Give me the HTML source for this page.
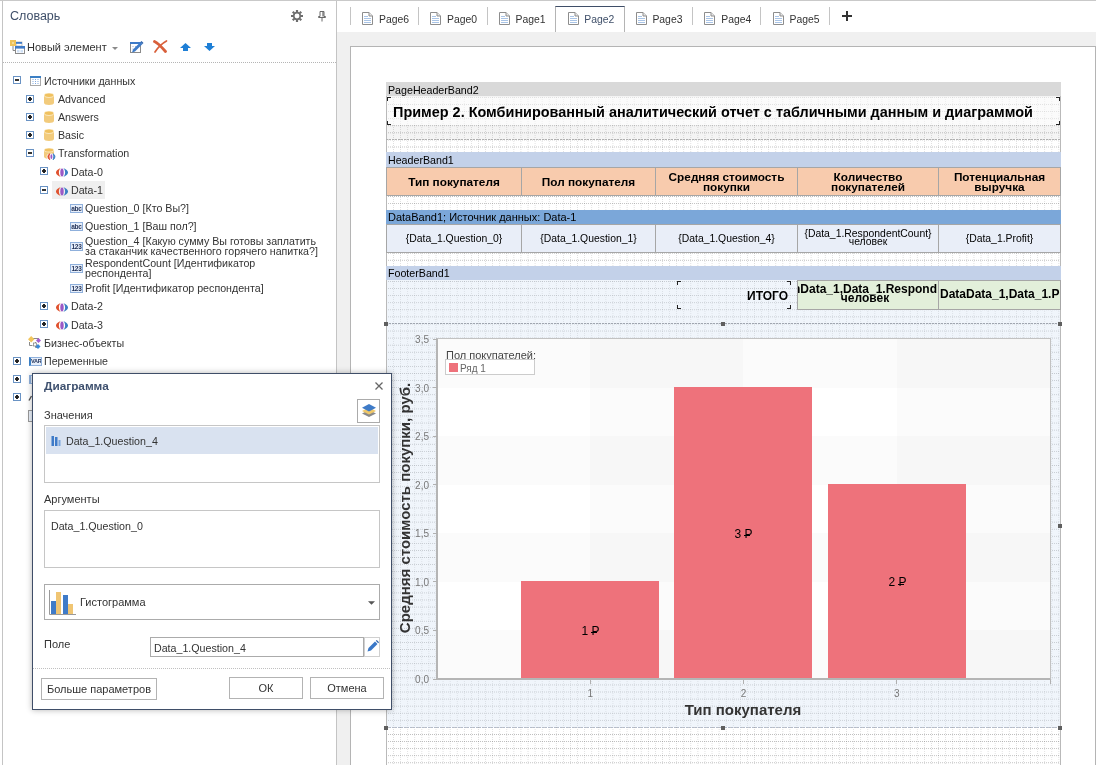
<!DOCTYPE html>
<html><head><meta charset="utf-8">
<style>
*{box-sizing:border-box;margin:0;padding:0}
html,body{width:1096px;height:765px;overflow:hidden;background:#fff;font-family:"Liberation Sans",sans-serif;font-size:10.67px;color:#333}
.a{position:absolute}
.t{position:absolute;white-space:nowrap;line-height:12px}
/* left panel */
#lp{left:0;top:0;width:337px;height:765px;background:#fff}
.ex{position:absolute;width:8px;height:8px;border:1px solid #6a93c4;background:#fff}
.ex:before{content:"";position:absolute;left:1px;top:2px;width:4px;height:2px;background:#333}
.ex.p:after{content:"";position:absolute;left:2px;top:1px;width:2px;height:4px;background:#222}
.tr{position:absolute;white-space:nowrap;line-height:12px;font-size:10.67px;color:#333}
/* workspace */
#ws{left:337px;top:0;width:759px;height:765px;background:#f0f0f0}
#tabs{left:0;top:0;width:759px;height:32px;background:#fff}
.tab{position:absolute;top:15px;font-size:10.4px;line-height:12px;color:#333;white-space:nowrap}
.sep{position:absolute;top:7px;width:1px;height:18px;background:#c4c4c4}
#page{left:13px;top:46px;width:746px;height:719px;background:#fff;border:1px solid #b4b4b4;border-bottom:0}
.grid{background-image:conic-gradient(at 1px 1px,transparent 270deg,rgba(0,0,0,.26) 0),conic-gradient(at 1px 1px,transparent 270deg,rgba(0,0,0,.13) 0);background-size:2px 7.086px,7.086px 2px;background-position:0 -.1px,.4px 0}
.bl{position:absolute;left:386px;width:675px;height:14px;font-size:10.67px;line-height:14px;color:#000;padding-left:2px;white-space:nowrap}
.cell{position:absolute;border:1px solid #a6a6a6;display:flex;align-items:center;justify-content:center;text-align:center;color:#000;overflow:hidden}
.hc{background:#f8cbad;font-weight:bold;font-size:11.8px;line-height:10px;top:167px;height:29px;padding-top:0}
.dc{background:#e9eef8;font-size:10.4px;line-height:9px;top:224px;height:29px}
.fc{background:#e2efda;font-weight:bold;font-size:12px;line-height:10.5px;top:280px;height:30px;white-space:nowrap}
.hd{position:absolute;width:4px;height:4px;background:#5f5f5f}
.yl{position:absolute;left:400px;width:29px;text-align:right;font-size:10px;line-height:10px;color:#777}
.yt{position:absolute;left:433px;width:4px;height:1px;background:#b0b0b0}
.bar{position:absolute;background:#ee727b}
.bv{position:absolute;font-size:12px;line-height:12px;color:#000;width:40px;text-align:center}
.xl{position:absolute;font-size:10px;line-height:10px;color:#777;width:20px;text-align:center;top:689px}
/* dialog */
#dlg{left:32px;top:373px;width:360px;height:337px;background:#fff;border:1px solid #3f4e68;box-shadow:0 0 6px rgba(0,0,0,.3)}
.dt{position:absolute;white-space:nowrap;font-size:11px;line-height:12px;color:#333}
.box{position:absolute;border:1px solid #c6c6c6;background:#fff}
.btn{position:absolute;border:1px solid #b3b3b3;background:#fff;font-size:11px;line-height:20px;text-align:center;color:#333;height:22px}
</style></head><body>
<div id="root" style="position:absolute;left:0;top:0;width:1096px;height:765px;will-change:transform;background:#fff">
<!-- LEFT PANEL -->
<div id="lp" class="a">
<div class="a" style="left:0;top:0;width:1096px;height:1px;background:#c9c9c9;z-index:5"></div>
<div class="a" style="left:2px;top:0;width:1px;height:765px;background:#c4c4c4"></div>
<div class="a" style="left:336px;top:0;width:1px;height:765px;background:#c4c4c4"></div>
<div class="t" style="left:10px;top:9px;font-size:12.5px;line-height:15px;color:#3f4f69">Словарь</div>
<div class="t" style="left:27px;top:41px;font-size:11px;line-height:13px;color:#333">Новый элемент</div>
<div class="a" style="left:3px;top:62px;width:333px;height:1px;background-image:repeating-linear-gradient(90deg,#b5b5b5 0 1px,transparent 1px 2px)"></div>
<svg class="a" style="left:291px;top:10px" width="12" height="12" viewBox="0 0 12 12"><g stroke="#6e6e6e" stroke-width="2.200"><path d="M6 0v2.200M6 9.800V12M0 6h2.200M9.800 6H12M1.760 1.760l1.500 1.500M8.740 8.740l1.500 1.500M10.240 1.760l-1.500 1.500M3.260 8.740l-1.500 1.500"/></g><circle cx="6" cy="6" r="3.300" fill="none" stroke="#6e6e6e" stroke-width="1.700"/></svg>
<svg class="a" style="left:318px;top:11px" width="8" height="11" viewBox="0 0 8 11"><path d="M2 .5h4v5h1.500v1h-7v-1H2z" fill="#fff" stroke="#6a6a6a"/><path d="M5 1v4.500" stroke="#6a6a6a" stroke-width="1.200"/><path d="M4 6.500v4" stroke="#6a6a6a"/></svg>
<svg class="a" style="left:10px;top:40px" width="15" height="14" viewBox="0 0 15 14"><path d="M3 6v4.500h2" stroke="#8a8a8a" fill="none"/><rect x="6" y="2" width="6" height="4" fill="#fff" stroke="#999" stroke-width=".6"/><rect x="6" y="2" width="6" height="1.800" fill="#3f7bc8"/><rect x="5.500" y="6.500" width="9" height="7" fill="#fff" stroke="#8a8a8a"/><rect x="5" y="6" width="10" height="2.600" fill="#3f7bc8"/><path d="M7 10h2.500v2.500H7zM10.500 10H13v2.500h-2.500z" fill="#cfe0f5"/><rect x="0" y="0" width="6" height="6" fill="#f0c35a"/><rect x="2" y="2" width="2" height="2" fill="#f7dc98"/></svg>
<svg class="a" style="left:111.500px;top:46.500px" width="6" height="3" viewBox="0 0 6 3"><path d="M0 0h6L3 3z" fill="#8a8a8a"/></svg>
<svg class="a" style="left:129px;top:40px" width="15" height="14" viewBox="0 0 15 14"><rect x="1.500" y="3" width="10" height="9.500" fill="#fff" stroke="#8a8a8a"/><rect x="1" y="2" width="11" height="2" fill="#3f7bc8"/><path d="M3.500 6.500h1M3.500 9h1M6 6.500h1" stroke="#9bb7de"/><path d="M3 12.500l1-3 7.500-7.500 2 2-7.500 7.500z" fill="#3f7bc8"/><path d="M11.500 2l1-1 2 2-1 1z" fill="#2a5fa8"/></svg>
<svg class="a" style="left:153px;top:40px" width="15" height="13" viewBox="0 0 15 13"><path d="M1.500 1.500C5 3 9 7.500 12.500 11.500" stroke="#d9603b" stroke-width="2.800" fill="none" stroke-linecap="round"/><path d="M13.500 1C9 3.500 4.500 8 2 12" stroke="#d9603b" stroke-width="1.700" fill="none" stroke-linecap="round"/></svg>
<svg class="a" style="left:180px;top:43px" width="11" height="8" viewBox="0 0 11 8"><path d="M5.500 0L11 5H8v3H3V5H0z" fill="#1e7fd6"/></svg>
<svg class="a" style="left:204px;top:43px" width="11" height="8" viewBox="0 0 11 8"><path d="M5.500 8L11 3H8V0H3v3H0z" fill="#1e7fd6"/></svg>
<div class="ex" style="left:13px;top:76px"></div>
<svg class="a" style="left:30px;top:76px" width="11" height="10" viewBox="0 0 11 10"><rect x=".5" y=".5" width="10" height="9" fill="#fff" stroke="#a9a9a9"/><rect x="0" y="0" width="11" height="2" fill="#3b7fc4"/><path d="M2.500 3.500h1M5 3.500h1M7.500 3.500h1M2.500 5.500h1M5 5.500h1M7.500 5.500h1M2.500 7.500h1M5 7.500h1M7.500 7.500h1" stroke="#7fa8df" stroke-width="1"/></svg>
<div class="tr" style="left:44px;top:75px">Источники данных</div>
<div class="ex p" style="left:26px;top:95px"></div>
<svg class="a" style="left:44px;top:93px" width="10" height="12" viewBox="0 0 10 12"><path d="M0 2.500v7.200c0 1.300 2.200 2.300 5 2.300s5-1 5-2.300V2.500z" fill="#f2cb7c"/><ellipse cx="5" cy="2.500" rx="5" ry="2.400" fill="#fae6bb"/><ellipse cx="5" cy="2.200" rx="4.200" ry="1.700" fill="#f0c15f"/></svg>
<div class="tr" style="left:58px;top:93px">Advanced</div>
<div class="ex p" style="left:26px;top:113px"></div>
<svg class="a" style="left:44px;top:111px" width="10" height="12" viewBox="0 0 10 12"><path d="M0 2.500v7.200c0 1.300 2.200 2.300 5 2.300s5-1 5-2.300V2.500z" fill="#f2cb7c"/><ellipse cx="5" cy="2.500" rx="5" ry="2.400" fill="#fae6bb"/><ellipse cx="5" cy="2.200" rx="4.200" ry="1.700" fill="#f0c15f"/></svg>
<div class="tr" style="left:58px;top:111px">Answers</div>
<div class="ex p" style="left:26px;top:131px"></div>
<svg class="a" style="left:44px;top:129px" width="10" height="12" viewBox="0 0 10 12"><path d="M0 2.500v7.200c0 1.300 2.200 2.300 5 2.300s5-1 5-2.300V2.500z" fill="#f2cb7c"/><ellipse cx="5" cy="2.500" rx="5" ry="2.400" fill="#fae6bb"/><ellipse cx="5" cy="2.200" rx="4.200" ry="1.700" fill="#f0c15f"/></svg>
<div class="tr" style="left:58px;top:129px">Basic</div>
<div class="ex" style="left:26px;top:149px"></div>
<svg class="a" style="left:44px;top:148px" width="12" height="12" viewBox="0 0 12 12"><path d="M0 2.300v6.500c0 1.200 2.200 2.200 5 2.200s5-1 5-2.200V2.300z" fill="#f2cb7c"/><ellipse cx="5" cy="2.300" rx="5" ry="2.200" fill="#fae6bb"/><ellipse cx="5" cy="2" rx="4.200" ry="1.500" fill="#f0c15f"/><ellipse cx="7.300" cy="8.700" rx="4.700" ry="3.300" fill="#fff"/><path d="M5.800 5.700a3.300 3.300 0 0 0 0 6c-1-2-1-4 0-6z" fill="#e0522f" stroke="#e0522f" stroke-width=".9"/><ellipse cx="7.400" cy="8.700" rx="1" ry="2.400" fill="#9b59c6"/><path d="M9 5.700a3.300 3.300 0 0 1 0 6c1-2 1-4 0-6z" fill="#3b7fc4" stroke="#3b7fc4" stroke-width=".9"/></svg>
<div class="tr" style="left:58px;top:147px">Transformation</div>
<div class="ex p" style="left:40px;top:167px"></div>
<svg class="a" style="left:56px;top:168.0px" width="12" height="9" viewBox="0 0 12 9"><path d="M4.700 0C-1.600 2.300-1.600 6.700 4.700 9 2.300 6.500 2.300 2.500 4.700 0z" fill="#e0522f"/><ellipse cx="6" cy="4.500" rx="1.700" ry="3.900" fill="#9b59c6"/><path d="M7.300 0C13.600 2.300 13.600 6.700 7.300 9 9.700 6.500 9.700 2.500 7.300 0z" fill="#3b7fc4"/></svg>
<div class="tr" style="left:71px;top:166px">Data-0</div>
<div class="a" style="left:52px;top:181px;width:53px;height:18px;background:#efefef"></div>
<div class="ex" style="left:40px;top:186px"></div>
<svg class="a" style="left:56px;top:186.5px" width="12" height="9" viewBox="0 0 12 9"><path d="M4.700 0C-1.600 2.300-1.600 6.700 4.700 9 2.300 6.500 2.300 2.500 4.700 0z" fill="#e0522f"/><ellipse cx="6" cy="4.500" rx="1.700" ry="3.900" fill="#9b59c6"/><path d="M7.300 0C13.600 2.300 13.600 6.700 7.300 9 9.700 6.500 9.700 2.500 7.300 0z" fill="#3b7fc4"/></svg>
<div class="tr" style="left:71px;top:184px">Data-1</div>
<div class="a" style="left:70px;top:204px;width:13px;height:9px;border:1px solid #8fb0dc;background:#e6eefa;font-size:6.500px;line-height:7px;font-weight:bold;color:#1f2f55;text-align:center;letter-spacing:-.2px;overflow:hidden;">abc</div>
<div class="tr" style="left:85px;top:202px">Question_0 [Кто Вы?]</div>
<div class="a" style="left:70px;top:222px;width:13px;height:9px;border:1px solid #8fb0dc;background:#e6eefa;font-size:6.500px;line-height:7px;font-weight:bold;color:#1f2f55;text-align:center;letter-spacing:-.2px;overflow:hidden;">abc</div>
<div class="tr" style="left:85px;top:220px">Question_1 [Ваш пол?]</div>
<div class="a" style="left:70px;top:242px;width:13px;height:9px;border:1px solid #8fb0dc;background:#e6eefa;font-size:6.500px;line-height:7px;font-weight:bold;color:#1f2f55;text-align:center;letter-spacing:-.2px;overflow:hidden;">123</div>
<div class="tr" style="left:85px;top:236px;line-height:10px">Question_4 [Какую сумму Вы готовы заплатить<br>за стаканчик качественного горячего напитка?]</div>
<div class="a" style="left:70px;top:264px;width:13px;height:9px;border:1px solid #8fb0dc;background:#e6eefa;font-size:6.500px;line-height:7px;font-weight:bold;color:#1f2f55;text-align:center;letter-spacing:-.2px;overflow:hidden;">123</div>
<div class="tr" style="left:85px;top:258px;line-height:10px">RespondentCount [Идентификатор<br>респондента]</div>
<div class="a" style="left:70px;top:284px;width:13px;height:9px;border:1px solid #8fb0dc;background:#e6eefa;font-size:6.500px;line-height:7px;font-weight:bold;color:#1f2f55;text-align:center;letter-spacing:-.2px;overflow:hidden;">123</div>
<div class="tr" style="left:85px;top:282px">Profit [Идентификатор респондента]</div>
<div class="ex p" style="left:40px;top:302px"></div>
<svg class="a" style="left:56px;top:303.0px" width="12" height="9" viewBox="0 0 12 9"><path d="M4.700 0C-1.600 2.300-1.600 6.700 4.700 9 2.300 6.500 2.300 2.500 4.700 0z" fill="#e0522f"/><ellipse cx="6" cy="4.500" rx="1.700" ry="3.900" fill="#9b59c6"/><path d="M7.300 0C13.600 2.300 13.600 6.700 7.300 9 9.700 6.500 9.700 2.500 7.300 0z" fill="#3b7fc4"/></svg>
<div class="tr" style="left:71px;top:300px">Data-2</div>
<div class="ex p" style="left:40px;top:320px"></div>
<svg class="a" style="left:56px;top:321.0px" width="12" height="9" viewBox="0 0 12 9"><path d="M4.700 0C-1.600 2.300-1.600 6.700 4.700 9 2.300 6.500 2.300 2.500 4.700 0z" fill="#e0522f"/><ellipse cx="6" cy="4.500" rx="1.700" ry="3.900" fill="#9b59c6"/><path d="M7.300 0C13.600 2.300 13.600 6.700 7.300 9 9.700 6.500 9.700 2.500 7.300 0z" fill="#3b7fc4"/></svg>
<div class="tr" style="left:71px;top:319px">Data-3</div>
<svg class="a" style="left:28px;top:336px" width="13" height="13" viewBox="0 0 13 13"><path d="M1.500 6v3.500h3M5 2.500h6M7.500 6v5.500h2" stroke="#8a8a8a" fill="none"/><rect x="5.500" y="7" width="3" height="3" fill="#fff" stroke="#8a8a8a" stroke-width=".8"/><path d="M3.200 0l3.200 3.200-3.200 3.200L0 3.200z" fill="#f2c55c"/><path d="M10.500 2l2.500 2.500-2.500 2.500L8 4.500z" fill="#a45fd0"/><path d="M10 8l2.500 2.500L10 13 7.500 10.500z" fill="#3b8ad8"/></svg>
<div class="tr" style="left:44px;top:337px">Бизнес-объекты</div>
<div class="ex p" style="left:13px;top:357px"></div>
<div class="a" style="left:29px;top:357px;width:13px;height:9px;border:1px solid #8fb0dc;background:#e6eefa;font-size:6.500px;line-height:7px;font-weight:bold;color:#1f2f55;text-align:center;letter-spacing:-.2px;overflow:hidden;border-left:2px solid #3b7fc4;font-size:5.500px;letter-spacing:-.3px">VAR</div>
<div class="tr" style="left:44px;top:355px">Переменные</div>
<div class="ex p" style="left:13px;top:375px"></div>
<div class="a" style="left:29px;top:375px;width:13px;height:9px;border:1px solid #8fb0dc;background:#e6eefa;font-size:6.500px;line-height:7px;font-weight:bold;color:#1f2f55;text-align:center;letter-spacing:-.2px;overflow:hidden;border-left:2px solid #8fb0dc"></div>
<div class="ex p" style="left:13px;top:393px"></div>
<div class="a" style="left:28px;top:410px;width:6px;height:12px;border:1px solid #999;background:#eaf1fa"></div>
<svg class="a" style="left:27px;top:391px" width="8" height="10" viewBox="0 0 8 10"><path d="M2 9.500L4.500 5" stroke="#555" stroke-width="1.400"/></svg>
</div>
<!-- WORKSPACE -->
<div id="ws" class="a">
<div id="tabs" class="a">
<svg class="a" style="left:24.5px;top:12px" width="11" height="13" viewBox="0 0 11 13"><path d="M.5 .5h6.500l3.500 3.500v8.500h-10z" fill="#fff" stroke="#8d8d8d"/><path d="M7 .5v3.500h3.500" fill="#e8e8e8" stroke="#8d8d8d"/><path d="M2 4.500h4M2 6.500h7M2 8.500h7M2 10.500h7" stroke="#a9c4e6" stroke-width="1.200"/></svg>
<div class="tab" style="left:42px;top:14px;color:#333">Page6</div>
<svg class="a" style="left:93px;top:12px" width="11" height="13" viewBox="0 0 11 13"><path d="M.5 .5h6.500l3.500 3.500v8.500h-10z" fill="#fff" stroke="#8d8d8d"/><path d="M7 .5v3.500h3.500" fill="#e8e8e8" stroke="#8d8d8d"/><path d="M2 4.500h4M2 6.500h7M2 8.500h7M2 10.500h7" stroke="#a9c4e6" stroke-width="1.200"/></svg>
<div class="tab" style="left:110px;top:14px;color:#333">Page0</div>
<svg class="a" style="left:162px;top:12px" width="11" height="13" viewBox="0 0 11 13"><path d="M.5 .5h6.500l3.500 3.500v8.500h-10z" fill="#fff" stroke="#8d8d8d"/><path d="M7 .5v3.500h3.500" fill="#e8e8e8" stroke="#8d8d8d"/><path d="M2 4.500h4M2 6.500h7M2 8.500h7M2 10.500h7" stroke="#a9c4e6" stroke-width="1.200"/></svg>
<div class="tab" style="left:178.5px;top:14px;color:#333">Page1</div>
<svg class="a" style="left:230.5px;top:12px" width="11" height="13" viewBox="0 0 11 13"><path d="M.5 .5h6.500l3.500 3.500v8.500h-10z" fill="#fff" stroke="#8d8d8d"/><path d="M7 .5v3.500h3.500" fill="#e8e8e8" stroke="#8d8d8d"/><path d="M2 4.500h4M2 6.500h7M2 8.500h7M2 10.500h7" stroke="#a9c4e6" stroke-width="1.200"/></svg>
<div class="tab" style="left:247.29999999999995px;top:14px;color:#3f4f69">Page2</div>
<svg class="a" style="left:298.5px;top:12px" width="11" height="13" viewBox="0 0 11 13"><path d="M.5 .5h6.500l3.500 3.500v8.500h-10z" fill="#fff" stroke="#8d8d8d"/><path d="M7 .5v3.500h3.500" fill="#e8e8e8" stroke="#8d8d8d"/><path d="M2 4.500h4M2 6.500h7M2 8.500h7M2 10.500h7" stroke="#a9c4e6" stroke-width="1.200"/></svg>
<div class="tab" style="left:315.4px;top:14px;color:#333">Page3</div>
<svg class="a" style="left:367px;top:12px" width="11" height="13" viewBox="0 0 11 13"><path d="M.5 .5h6.500l3.500 3.500v8.500h-10z" fill="#fff" stroke="#8d8d8d"/><path d="M7 .5v3.500h3.500" fill="#e8e8e8" stroke="#8d8d8d"/><path d="M2 4.500h4M2 6.500h7M2 8.500h7M2 10.500h7" stroke="#a9c4e6" stroke-width="1.200"/></svg>
<div class="tab" style="left:384.29999999999995px;top:14px;color:#333">Page4</div>
<svg class="a" style="left:435.5px;top:12px" width="11" height="13" viewBox="0 0 11 13"><path d="M.5 .5h6.500l3.500 3.500v8.500h-10z" fill="#fff" stroke="#8d8d8d"/><path d="M7 .5v3.500h3.500" fill="#e8e8e8" stroke="#8d8d8d"/><path d="M2 4.500h4M2 6.500h7M2 8.500h7M2 10.500h7" stroke="#a9c4e6" stroke-width="1.200"/></svg>
<div class="tab" style="left:452.6px;top:14px;color:#333">Page5</div>
<div class="sep" style="left:13px"></div>
<div class="sep" style="left:81px"></div>
<div class="sep" style="left:150px"></div>
<div class="sep" style="left:355px"></div>
<div class="sep" style="left:423px"></div>
<div class="sep" style="left:492px"></div>
<div class="a" style="left:218px;top:6px;width:70px;height:26px;border:1px solid #b4b4b4;border-top:1px solid #3f4e68;border-bottom:0"></div>
<div class="a" style="left:505px;top:15px;width:10px;height:2px;background:#333"></div><div class="a" style="left:509px;top:11px;width:2px;height:10px;background:#333"></div>
</div>
<div id="page" class="a"></div>
</div>
<div class="a grid" style="left:386px;top:97px;width:675px;height:668px;background-position:0 0"></div>
<div class="a" style="left:386px;top:82px;width:1px;height:683px;background:#b9b9b9"></div>
<div class="a" style="left:1060px;top:82px;width:1px;height:683px;background:#b9b9b9"></div>
<div class="bl" style="top:82px;background:#d9d9d9;padding-top:1px">PageHeaderBand2</div>
<div class="a" style="left:387px;top:96px;width:673px;height:43px;background:rgba(0,0,0,.045)"></div>
<div class="a" style="left:386px;top:139px;width:675px;height:1px;background-image:repeating-linear-gradient(90deg,#b0b0b0 0 2px,transparent 2px 3px)"></div>
<div class="a" style="left:387px;top:97px;width:673px;height:28px;background:rgba(255,255,255,.6)"></div>
<div class="t" style="left:393px;top:103px;font-size:14.44px;line-height:18px;font-weight:bold;color:#000">Пример 2. Комбинированный аналитический отчет с табличными данным и диаграммой</div>
<div class="a" style="left:387px;top:97px;width:4px;height:4px;border-left:1px solid #222;border-top:1px solid #222"></div>
<div class="a" style="left:387px;top:121px;width:4px;height:4px;border-left:1px solid #222;border-bottom:1px solid #222"></div>
<div class="a" style="left:1056px;top:97px;width:4px;height:4px;border-right:1px solid #222;border-top:1px solid #222"></div>
<div class="a" style="left:1056px;top:121px;width:4px;height:4px;border-right:1px solid #222;border-bottom:1px solid #222"></div>
<div class="bl" style="top:152.300px;height:14.700px;background:#c3d1e9;padding-top:.7px">HeaderBand1</div>
<div class="cell hc" style="left:386px;width:136px">Тип покупателя</div>
<div class="cell hc" style="left:521px;width:135px">Пол покупателя</div>
<div class="cell hc" style="left:655px;width:143px">Средняя стоимость<br>покупки</div>
<div class="cell hc" style="left:797px;width:142px">Количество<br>покупателей</div>
<div class="cell hc" style="left:938px;width:123px">Потенциальная<br>выручка</div>
<div class="bl" style="top:209.600px;height:14.400px;background:#7ba7d9;font-size:11px">DataBand1; Источник данных: Data-1</div>
<div class="cell dc" style="left:386px;width:136px">{Data_1.Question_0}</div>
<div class="cell dc" style="left:521px;width:135px">{Data_1.Question_1}</div>
<div class="cell dc" style="left:655px;width:143px">{Data_1.Question_4}</div>
<div class="cell dc" style="left:797px;width:142px"><span style="position:relative;top:-1px;line-height:8px">{Data_1.RespondentCount}<br>человек</span></div>
<div class="cell dc" style="left:938px;width:123px">{Data_1.Profit}</div>
<div class="a" style="left:387px;top:280px;width:673px;height:44px;background:rgba(214,226,245,.36)"></div>
<div class="bl" style="top:265.900px;height:14.500px;background:#c3d1e9">FooterBand1</div>
<div class="t" style="left:677px;top:289px;width:111px;text-align:right;font-size:12px;line-height:14px;font-weight:bold;color:#000">ИТОГО</div>
<div class="a" style="left:677px;top:281px;width:4px;height:4px;border-left:1px solid #222;border-top:1px solid #222"></div>
<div class="a" style="left:677px;top:305px;width:4px;height:4px;border-left:1px solid #222;border-bottom:1px solid #222"></div>
<div class="a" style="left:787px;top:281px;width:4px;height:4px;border-right:1px solid #222;border-top:1px solid #222"></div>
<div class="a" style="left:787px;top:305px;width:4px;height:4px;border-right:1px solid #222;border-bottom:1px solid #222"></div>
<div class="cell fc" style="left:797px;width:142px"><span style="position:relative;top:-1px;left:-3px;line-height:8.800px">nData_1,Data_1.Respond<br>человек</span></div>
<div class="cell fc" style="left:938px;width:123px;justify-content:flex-start"><span style="position:relative;left:1px;top:-1px">DataData_1,Data_1.Profit</span></div>
<div class="a" style="left:387px;top:324px;width:673px;height:403px;background:rgba(214,226,245,.36)"></div>
<div class="a" style="left:386px;top:323px;width:675px;height:1px;background-image:repeating-linear-gradient(90deg,#a0a6b0 0 2px,transparent 2px 3px)"></div>
<div class="a" style="left:386px;top:727px;width:675px;height:1px;background-image:repeating-linear-gradient(90deg,#b4bccb 0 2px,transparent 2px 3px)"></div>
<div class="a" style="left:437px;top:339px;width:613px;height:340px;background:#fff"></div>
<div class="a" style="left:437px;top:339.0px;width:613px;height:48.6px;background:rgba(0,0,0,.017)"></div>
<div class="a" style="left:437px;top:436.1px;width:613px;height:48.6px;background:rgba(0,0,0,.017)"></div>
<div class="a" style="left:437px;top:533.3px;width:613px;height:48.6px;background:rgba(0,0,0,.017)"></div>
<div class="a" style="left:437px;top:630.4px;width:613px;height:48.6px;background:rgba(0,0,0,.017)"></div>
<div class="a" style="left:590.2px;top:339px;width:153.2px;height:340px;background:rgba(0,0,0,.017)"></div>
<div class="a" style="left:896.8px;top:339px;width:153.2px;height:340px;background:rgba(0,0,0,.017)"></div>
<div class="a" style="left:436px;top:338px;width:615px;height:342px;border:1px solid #c2c2c2;border-left:2px solid #b5b5b5;border-bottom:2px solid #b5b5b5"></div>
<div class="yl" style="top:335.0px">3,5</div>
<div class="yt" style="top:338.5px"></div>
<div class="yl" style="top:383.6px">3,0</div>
<div class="yt" style="top:387.1px"></div>
<div class="yl" style="top:432.1px">2,5</div>
<div class="yt" style="top:435.6px"></div>
<div class="yl" style="top:480.7px">2,0</div>
<div class="yt" style="top:484.2px"></div>
<div class="yl" style="top:529.3px">1,5</div>
<div class="yt" style="top:532.8px"></div>
<div class="yl" style="top:577.9px">1,0</div>
<div class="yt" style="top:581.4px"></div>
<div class="yl" style="top:626.4px">0,5</div>
<div class="yt" style="top:629.9px"></div>
<div class="yl" style="top:675.0px">0,0</div>
<div class="yt" style="top:678.5px"></div>
<div class="bar" style="left:521px;top:581px;width:138px;height:97px"></div>
<div class="bv" style="left:570.5px;top:624.5px">1 <span style="position:relative;display:inline-block">P<i style="position:absolute;left:-1px;top:7.500px;width:6px;height:1px;background:#000"></i></span></div>
<div class="bar" style="left:674px;top:387px;width:138px;height:291px"></div>
<div class="bv" style="left:723.5px;top:527.5px">3 <span style="position:relative;display:inline-block">P<i style="position:absolute;left:-1px;top:7.500px;width:6px;height:1px;background:#000"></i></span></div>
<div class="bar" style="left:828px;top:484px;width:138px;height:194px"></div>
<div class="bv" style="left:877.5px;top:576.0px">2 <span style="position:relative;display:inline-block">P<i style="position:absolute;left:-1px;top:7.500px;width:6px;height:1px;background:#000"></i></span></div>
<div class="a" style="left:589.8px;top:680px;width:1px;height:4px;background:#b0b0b0"></div>
<div class="xl" style="left:580.2px">1</div>
<div class="a" style="left:743.0px;top:680px;width:1px;height:4px;background:#b0b0b0"></div>
<div class="xl" style="left:733.5px">2</div>
<div class="a" style="left:896.2px;top:680px;width:1px;height:4px;background:#b0b0b0"></div>
<div class="xl" style="left:886.8px">3</div>
<div class="a" style="left:1050px;top:680px;width:1px;height:4px;background:#b0b0b0"></div>
<div class="t" style="left:643px;top:701px;width:200px;text-align:center;font-size:15px;line-height:18px;font-weight:bold;color:#333">Тип покупателя</div>
<div class="t" style="left:255px;top:499px;width:300px;text-align:center;font-size:15px;line-height:18px;font-weight:bold;color:#333;transform:rotate(-90deg)">Средняя стоимость покупки, руб.</div>
<div class="t" style="left:446px;top:349px;font-size:11px;line-height:12px;color:#444">Пол покупателей:</div>
<div class="a" style="left:445px;top:359px;width:90px;height:16px;border:1px solid #ccc;background:#fff"></div>
<div class="a" style="left:449px;top:363px;width:9px;height:9px;background:#ee727b"></div>
<div class="t" style="left:460px;top:364px;font-size:10px;line-height:10px;color:#666">Ряд 1</div>
<div class="hd" style="left:384px;top:321.6px"></div>
<div class="hd" style="left:721px;top:321.6px"></div>
<div class="hd" style="left:1058px;top:321.6px"></div>
<div class="hd" style="left:384px;top:523.5px"></div>
<div class="hd" style="left:1058px;top:523.5px"></div>
<div class="hd" style="left:384px;top:725.6px"></div>
<div class="hd" style="left:721px;top:725.6px"></div>
<div class="hd" style="left:1058px;top:725.6px"></div>
<div id="dlg" class="a">
<div class="dt" style="left:11px;top:6px;font-size:11.800px;font-weight:bold;color:#3f516f">Диаграмма</div>
<svg class="a" style="left:342px;top:8px" width="8" height="8" viewBox="0 0 8 8"><path d="M.5 .5l7 7M7.500 .5l-7 7" stroke="#666" stroke-width="1.300"/></svg>
<div class="dt" style="left:11px;top:35px;">Значения</div>
<div class="box" style="left:324px;top:25px;width:23px;height:24px;border-color:#ababab"></div>
<svg class="a" style="left:328px;top:29px" width="16" height="16" viewBox="0 0 16 16"><path d="M8 7l7 3.500-7 3.500-7-3.500z" fill="#8a8a8a"/><path d="M8 4.500l7 3.500-7 3.500-7-3.500z" fill="#f0c869"/><path d="M8 1l7 3.700-7 3.700-7-3.700z" fill="#3f7bc8"/></svg>
<div class="box" style="left:11px;top:51px;width:336px;height:58px;"></div>
<div class="a" style="left:13px;top:53px;width:332px;height:27px;background:#d9e2f0"></div>
<svg class="a" style="left:18px;top:62px" width="10" height="10" viewBox="0 0 10 10"><rect x=".5" y="0" width="2.500" height="10" fill="#3f7bc8"/><rect x="4" y="1" width="2.500" height="9" fill="#3f7bc8"/><rect x="7.500" y="4" width="2" height="6" fill="#7aa5dd"/></svg>
<div class="dt" style="left:33px;top:61px;font-size:10.670px">Data_1.Question_4</div>
<div class="dt" style="left:11px;top:119px;">Аргументы</div>
<div class="box" style="left:11px;top:136px;width:336px;height:58px;"></div>
<div class="dt" style="left:18px;top:146px;font-size:10.670px">Data_1.Question_0</div>
<div class="box" style="left:11px;top:210px;width:336px;height:36px;border-color:#ababab"></div>
<svg class="a" style="left:16px;top:216px" width="27" height="25" viewBox="0 0 27 25"><path d="M.5 0v24.500H27" stroke="#9a9a9a" fill="none"/><rect x="2" y="11" width="5" height="13" fill="#3f7bc8"/><rect x="7" y="2" width="5" height="22" fill="#f0c573"/><rect x="14" y="5" width="5" height="19" fill="#3f7bc8"/><rect x="19" y="14" width="5" height="10" fill="#f0c573"/></svg>
<div class="dt" style="left:47px;top:222px;">Гистограмма</div>
<svg class="a" style="left:335px;top:227px" width="7" height="4" viewBox="0 0 7 4"><path d="M0 .3h7L3.500 3.800z" fill="#555"/></svg>
<div class="dt" style="left:11px;top:264px;">Поле</div>
<div class="box" style="left:117px;top:263px;width:214px;height:20px;border-color:#ababab"></div>
<div class="box" style="left:331px;top:263px;width:16px;height:20px;border-color:#d0d0d0"></div>
<div class="dt" style="left:121px;top:267.5px;font-size:10.670px">Data_1.Question_4</div>
<svg class="a" style="left:334px;top:266px" width="12" height="12" viewBox="0 0 12 12"><path d="M.5 11.500l1-3.500 6.500-6.500 2.500 2.500-6.500 6.500z" fill="#3a78c8"/><path d="M8.800 .8l1-0.800 2.200 2.200-.8 1z" fill="#2a5fa8"/></svg>
<div class="a" style="left:0px;top:294px;width:358px;height:1px;background-image:repeating-linear-gradient(90deg,#c0c0c0 0 1px,transparent 1px 2px)"></div>
<div class="btn" style="left:8px;top:304px;width:116px">Больше параметров</div>
<div class="btn" style="left:196px;top:303px;width:74px">ОК</div>
<div class="btn" style="left:277px;top:303px;width:74px">Отмена</div>
</div>
</div>
</body></html>
